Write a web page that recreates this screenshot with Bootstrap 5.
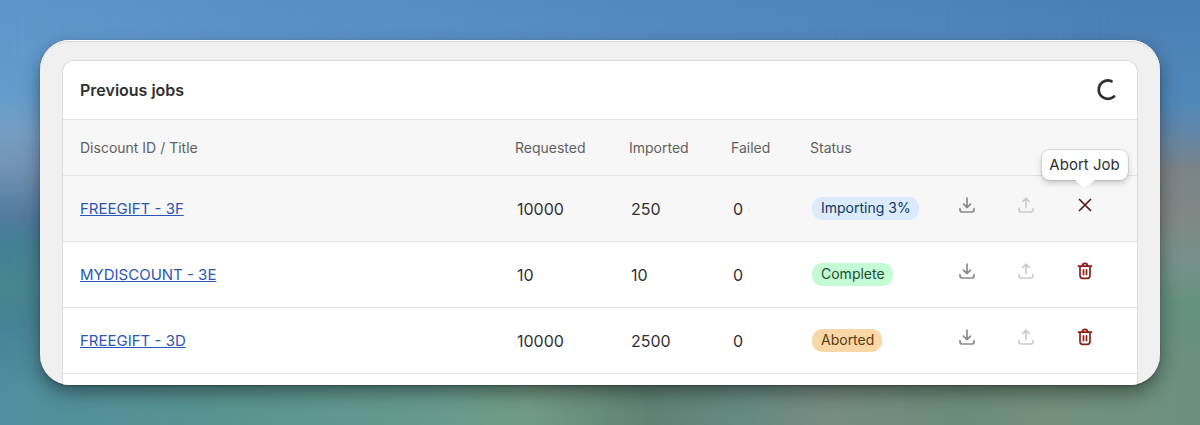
<!DOCTYPE html>
<html lang="en">
<head>
<meta charset="utf-8">
<meta name="viewport" content="width=device-width, initial-scale=1">
<title>Previous jobs</title>
<link href="https://cdn.jsdelivr.net/npm/bootstrap@5.3.0/dist/css/bootstrap.min.css" rel="stylesheet">
<style>
  body {
    font-family: Inter, "Liberation Sans", sans-serif;
    font-size: 15px;
    line-height: 20px;
    color: #303030;
  }
  .sky {
    position: relative;
    min-height: 100vh;
    padding: 40px;
    background: linear-gradient(180deg, #5e95ca 0%, #639ccd 22%, #769ec4 31%, #7393b5 39%, #527b9f 51%, #447f95 57%, #47868f 68%, #437d94 78%, #477f95 90%, #4f8f93 100%);
  }
  .sky::before, .sky::after { content: ""; position: absolute; inset: 0; }
  .sky::before {
    background: linear-gradient(180deg, #4a7fb5 0%, #5088ba 24%, #5f86ab 30%, #7a8388 40%, #7f8884 51%, #75918a 62%, #64917f 71%, #64907f 80%, #728f7c 100%);
    -webkit-mask-image: linear-gradient(90deg, transparent, #000 95%);
    mask-image: linear-gradient(90deg, transparent, #000 95%);
  }
  .sky::after {
    background: linear-gradient(90deg, #4f8e9f 0%, #5b948e 21%, #65998f 35%, #719a84 44%, #5f8275 54%, #658a80 62%, #778b82 69%, #6c8b7b 80%, #738f7b 87%, #6b907f 100%);
    -webkit-mask-image: linear-gradient(0deg, #000 8%, transparent 30%);
    mask-image: linear-gradient(0deg, #000 8%, transparent 30%);
  }
  .window {
    position: relative;
    z-index: 1;
    background: #f0f0f0;
    border-radius: 30px;
    padding: 20px 22px 0;
    box-shadow: inset 0 1px 0 #fff, inset 0 2px 0 #d8d8d8, 0 8px 18px #0006, 0 1px 2px #0004;
    overflow: hidden;
  }
  .jobs { border: 1px solid #dcdcdc; border-bottom: 0; border-radius: 12px 12px 0 0; background: #fff; }
  .jobs-head { height: 58px; padding: 0 17px; }
  .jobs-head h2 { font-size: 16px; line-height: 20px; font-weight: 600; }
  .spin { width: 24px; height: 24px; }
  .jobs-table { table-layout: fixed; margin: 0; color: #303030; }
  .jobs-table th, .jobs-table td { padding: 0 0 0 19px; border: 0; border-top: 1px solid #e3e3e3; vertical-align: middle; background: transparent; box-shadow: none; }
  .jobs-table th { height: 56px; padding-left: 17px; font-size: 14px; font-weight: 400; color: #616161; background: #f7f7f7; }
  .jobs-table td { height: 66px; font-size: 16px; }
  .jobs-table td:first-child { padding-left: 17px; font-size: 15px; }
  .jobs-table tr.busy td { background: #f7f7f7; }
  .jobs-table tr.tail td { height: 11px; }
  .jobs-table a { color: #2a56b8; }
  .c-req { width: 114px; } .c-imp { width: 102px; } .c-fail { width: 79px; } .c-stat { width: 125px; } .c-act { width: 219px; }
  .pill { display: inline-block; border-radius: 10px; padding: 1px 8px 2px 9px; font-size: 14px; line-height: 20px; vertical-align: middle; }
  .pill-info { background: #dbeafd; color: #12395c; }
  .pill-ok { background: #c4fad4; color: #1d4f33; }
  .pill-warn { background: #f9d8a8; color: #5a3a08; }
  .acts { padding-bottom: 8px; }
  .act { width: 59px; height: 24px; padding: 0; border: 0; color: #8a8a8a; background: none; position: relative; line-height: 1; }
  .act > svg { width: 22px; height: 22px; fill: none; stroke: currentColor; stroke-width: 1.700; stroke-linecap: round; stroke-linejoin: round; display: block; margin: 0 auto; }
  .act:disabled { color: #ccc; }
  .act-x { color: #5a1a10; }
  .act-del { color: #8a2116; }
  .tip { position: absolute; bottom: 37px; left: 50%; transform: translateX(-50%); white-space: nowrap; background: #fff; color: #303030; border-radius: 8px; padding: 5px 8px; font-size: 15px; line-height: 20px; box-shadow: 0 0 0 1px #0000001a, 0 3px 6px #0003; }
  .tip svg { position: absolute; top: 100%; left: 50%; width: 20px; height: 8px; margin-left: -10px; fill: #fff; }
</style>
</head>
<body>
<svg class="d-none">
  <symbol id="down" viewBox="0 0 22 22"><path d="M11 4v9M7.500 10.200l3.500 3.500 3.500-3.500M4 14.700v1q0 2.300 2.300 2.300h9.400q2.300 0 2.300-2.300v-1"/></symbol>
  <symbol id="up" viewBox="0 0 22 22"><path d="M11 13.500V4.500M7.700 7.500L11 4.200l3.300 3.300M4 14.700v1q0 2.300 2.300 2.300h9.400q2.300 0 2.300-2.300v-1"/></symbol>
  <symbol id="cross" viewBox="0 0 22 22"><path d="M5.500 5.500l11 11M16.500 5.500l-11 11"/></symbol>
  <symbol id="bin" viewBox="0 0 22 22"><path d="M4.500 6.200h13M8.300 6q0-2.700 2.700-2.700T13.700 6M6 6.500V15.500q0 2.800 2.800 2.800h4.400Q16 18.300 16 15.500V6.500"/><path d="M9.500 9.800v4.800M12.500 9.800v4.800"/></symbol>
</svg>
<div class="sky">
  <main class="window">
    <section class="jobs">
      <header class="jobs-head d-flex align-items-center justify-content-between">
        <h2 class="m-0">Previous jobs</h2>
        <svg class="spin" viewBox="0 0 24 24" fill="none" stroke="#303030" stroke-width="2.800" stroke-linecap="round" role="status" aria-label="Loading"><path d="M15.500 3.200A9.200 9.200 0 1 0 18 18.500"/></svg>
      </header>
      <table class="table jobs-table">
        <colgroup><col><col class="c-req"><col class="c-imp"><col class="c-fail"><col class="c-stat"><col class="c-act"></colgroup>
        <thead>
          <tr><th scope="col">Discount ID / Title</th><th scope="col">Requested</th><th scope="col">Imported</th><th scope="col">Failed</th><th scope="col">Status</th><th></th></tr>
        </thead>
        <tbody>
          <tr class="busy">
            <td><a href="#">FREEGIFT - 3F</a></td><td>10000</td><td>250</td><td>0</td><td><span class="pill pill-info text-nowrap">Importing 3%</span></td>
            <td><div class="acts d-flex">
              <button type="button" class="act" aria-label="Download"><svg><use href="#down"/></svg></button>
              <button type="button" class="act" aria-label="Upload" disabled><svg><use href="#up"/></svg></button>
              <button type="button" class="act act-x"><svg><use href="#cross"/></svg><span class="tip">Abort Job<svg viewBox="0 0 20 8"><path d="M0 0H20L11 7.500Q10 8 9 7.500Z"/></svg></span></button>
            </div></td>
          </tr>
          <tr>
            <td><a href="#">MYDISCOUNT - 3E</a></td><td>10</td><td>10</td><td>0</td><td><span class="pill pill-ok">Complete</span></td>
            <td><div class="acts d-flex">
              <button type="button" class="act" aria-label="Download"><svg><use href="#down"/></svg></button>
              <button type="button" class="act" aria-label="Upload" disabled><svg><use href="#up"/></svg></button>
              <button type="button" class="act act-del" aria-label="Delete"><svg><use href="#bin"/></svg></button>
            </div></td>
          </tr>
          <tr>
            <td><a href="#">FREEGIFT - 3D</a></td><td>10000</td><td>2500</td><td>0</td><td><span class="pill pill-warn">Aborted</span></td>
            <td><div class="acts d-flex">
              <button type="button" class="act" aria-label="Download"><svg><use href="#down"/></svg></button>
              <button type="button" class="act" aria-label="Upload" disabled><svg><use href="#up"/></svg></button>
              <button type="button" class="act act-del" aria-label="Delete"><svg><use href="#bin"/></svg></button>
            </div></td>
          </tr>
          <tr class="tail"><td colspan="6"></td></tr>
        </tbody>
      </table>
    </section>
  </main>
</div>
<script src="https://cdn.jsdelivr.net/npm/bootstrap@5.3.0/dist/js/bootstrap.bundle.min.js"></script>
</body>
</html>
